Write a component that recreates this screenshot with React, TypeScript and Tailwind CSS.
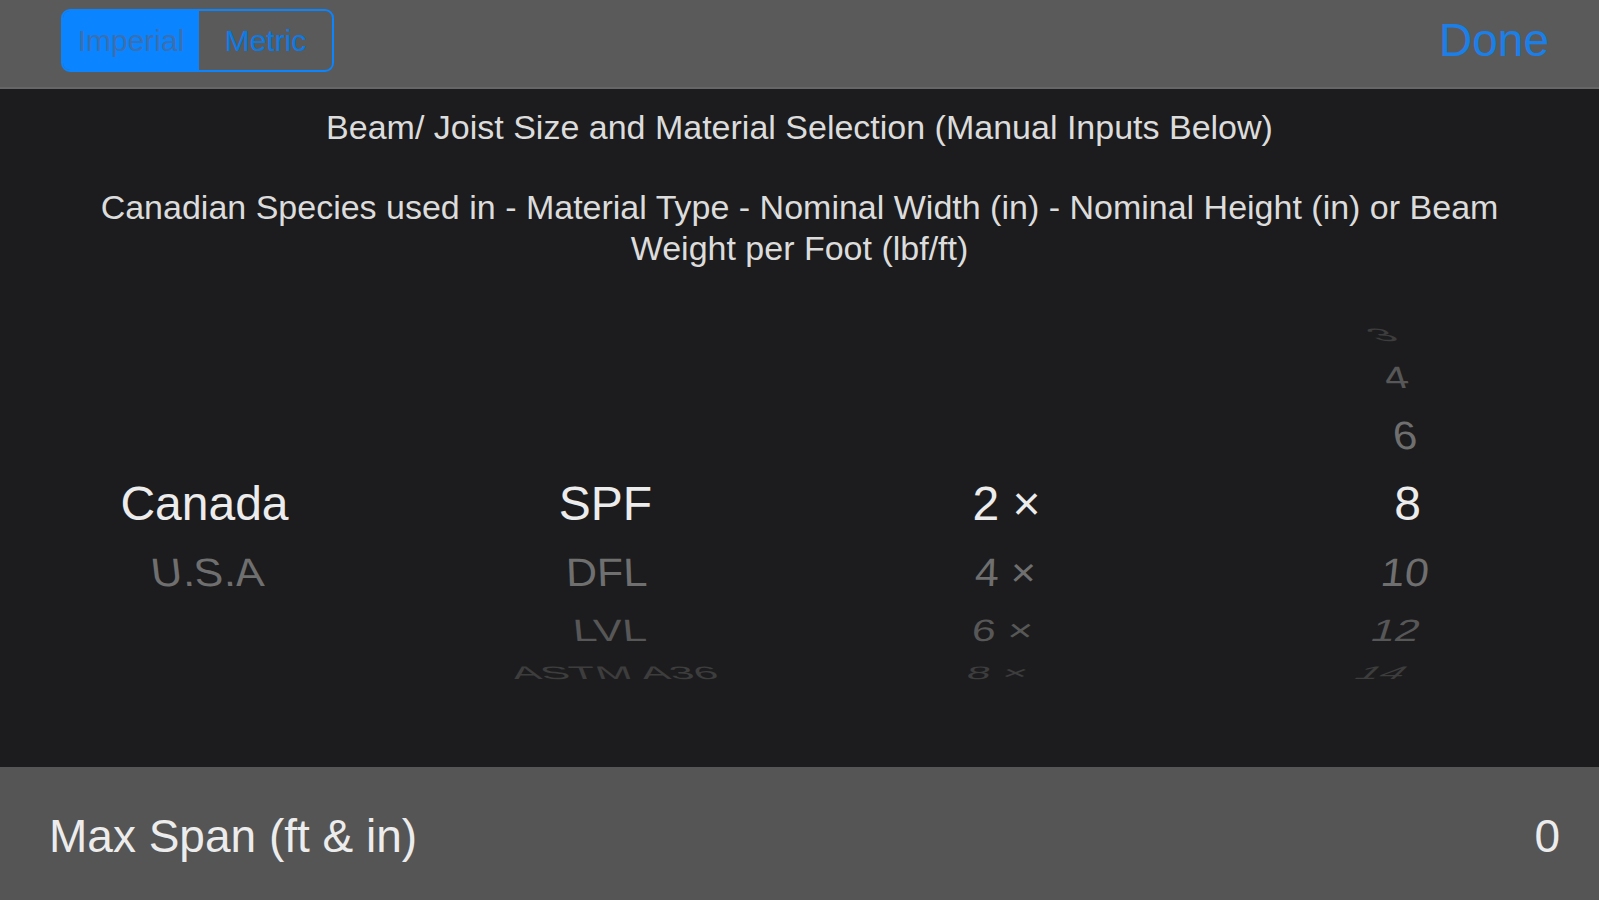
const ROW_HEIGHTS = ["h-[40px]", "h-[46px]", "h-[70px]", "h-[68px]", "h-[68px]", "h-[48px]", "h-[36px]"];

// text look per distance from the selected row (0 = selected)
const LEVEL = [
  "text-[43px] text-[#3d3d3d] scale-y-[0.42]",
  "text-[43px] text-[#575757] scale-y-[0.72]",
  "text-[43px] text-[#6f6f6f] scale-y-[0.92]",
  "text-[48px] text-[#ececec]",
  "text-[43px] text-[#6f6f6f] scale-y-[0.92]",
  "text-[43px] text-[#575757] scale-y-[0.72]",
  "text-[43px] text-[#3d3d3d] scale-y-[0.42]",
];

type Column = { items: (string | null)[]; tilt: string[] };

const columns: Column[] = [
  {
    items: [null, null, null, "Canada", "U.S.A", null, null],
    tilt: ["", "", "", "", "translate-x-[3px] skew-x-[6deg]", "", ""],
  },
  {
    items: [null, null, null, "SPF", "DFL", "LVL", "ASTM A36"],
    tilt: [
      "",
      "",
      "",
      "",
      "translate-x-[1px] skew-x-[2deg]",
      "translate-x-[4px] skew-x-[4deg]",
      "translate-x-[9px] skew-x-[9deg]",
    ],
  },
  {
    items: [null, null, null, "2 ×", "4 ×", "6 ×", "8 ×"],
    tilt: [
      "",
      "",
      "",
      "",
      "-translate-x-[1px] -skew-x-[2deg]",
      "-translate-x-[4px] -skew-x-[4deg]",
      "-translate-x-[9px] -skew-x-[6deg]",
    ],
  },
  {
    items: ["3", "4", "6", "8", "10", "12", "14"],
    tilt: [
      "-translate-x-[26px] skew-x-[27deg]",
      "-translate-x-[12px] skew-x-[13deg]",
      "-translate-x-[3px] skew-x-[6deg]",
      "",
      "-translate-x-[3px] -skew-x-[6deg]",
      "-translate-x-[12px] -skew-x-[13deg]",
      "-translate-x-[26px] -skew-x-[24deg]",
    ],
  },
];

function Wheel({ items, tilt }: Column) {
  return (
    <div className="flex flex-col">
      {items.map((item, i) => (
        <div key={i} className={`${ROW_HEIGHTS[i]} flex items-center justify-center`}>
          {item && (
            <span className={`${LEVEL[i]} ${tilt[i]} leading-none whitespace-nowrap`}>{item}</span>
          )}
        </div>
      ))}
    </div>
  );
}

export default function App() {
  return (
    <div className="flex h-[900px] w-[1599px] flex-col overflow-hidden bg-[#1c1c1e] font-['Liberation_Sans',Arial,sans-serif]">
      <div className="flex h-[89px] shrink-0 items-start justify-between border-b-2 border-[#666666] bg-[#5a5a5a] pt-[9px] pr-[50px] pl-[61px]">
        <div className="flex h-[63px] w-[273px] overflow-hidden rounded-[9px] border-2 border-[#0a84ff]">
          <div className="flex w-[136px] items-center justify-center bg-[#0a84ff] text-[30px] text-[#3d6fae]">
            Imperial
          </div>
          <div className="flex flex-1 items-center justify-center text-[30px] text-[#0a7ae8]">Metric</div>
        </div>
        <button className="mt-[8px] text-[46px] leading-none text-[#1a7fe8]">Done</button>
      </div>

      <div className="flex flex-1 flex-col pt-[18px]">
        <p className="text-center text-[34px] leading-[40px] text-[#dcdcdc]">
          Beam/ Joist Size and Material Selection (Manual Inputs Below)
        </p>
        <p className="mx-auto mt-[40px] w-[1440px] text-center text-[34px] leading-[41px] text-[#dcdcdc]">
          Canadian Species used in - Material Type - Nominal Width (in) - Nominal Height (in) or Beam Weight per
          Foot (lbf/ft)
        </p>
        <div className="mt-[45px] grid w-[1608px] grid-cols-[repeat(4,401px)] pl-[4px]">
          {columns.map((col, i) => (
            <Wheel key={i} {...col} />
          ))}
        </div>
      </div>

      <div className="flex h-[133px] shrink-0 items-center justify-between bg-[#555555] pt-[5px] pr-[39px] pl-[49px] text-[46px] text-[#ececec]">
        <span>Max Span (ft &amp; in)</span>
        <span>0</span>
      </div>
    </div>
  );
}
